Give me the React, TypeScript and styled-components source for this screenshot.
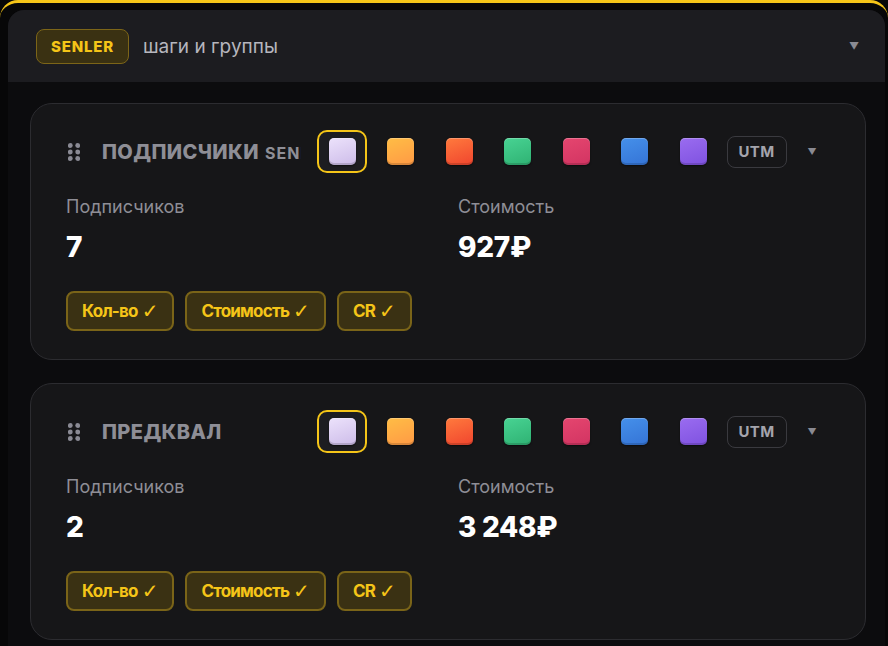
import React from "react";
import styled, { createGlobalStyle } from "styled-components";

const Global = createGlobalStyle`
  html, body { margin: 0; padding: 0; background: #070708; overflow: hidden; }
  body { font-family: Inter, "Noto Sans", "DejaVu Sans", sans-serif; }
  * { box-sizing: border-box; }
`;

const Frame = styled.div`
  width: 888px;
  height: 646px;
  border-top: 3px solid #f5c518;
  border-radius: 18px 18px 0 0;
  background: #070708;
  padding: 7px 3px 0 8px;
  overflow: hidden;
`;

const Panel = styled.div`
  background: #0c0c0e;
  border-radius: 16px 16px 0 0;
  height: 100%;
  display: flex;
  flex-direction: column;
`;

const Header = styled.div`
  height: 72px;
  background: #1c1c20;
  border-radius: 16px 16px 0 0;
  display: flex;
  align-items: center;
  padding: 0 26px 0 28px;
  gap: 14px;
`;

const SourceBadge = styled.span`
  height: 35px;
  width: 93px;
  display: inline-flex;
  align-items: center;
  justify-content: center;
  border: 1.5px solid #7c6518;
  background: #3a3112;
  border-radius: 8px;
  color: #f5c518;
  font-weight: 800;
  font-size: 15px;
  letter-spacing: 0.8px;
`;

const HeaderText = styled.span`
  flex: 1;
  color: #b6b6be;
  font-size: 19px;
`;

const Caret = styled.span<{ $size?: number }>`
  color: #8a8a92;
  font-size: ${(p) => p.$size ?? 9}px;
  line-height: 1;
  display: inline-flex;
  align-items: center;
  justify-content: center;
`;

const Body = styled.div`
  padding: 21px 19px 0 22px;
  display: flex;
  flex-direction: column;
  gap: 23px;
`;

const Card = styled.div`
  background: #161618;
  border: 1px solid #2c2c30;
  border-radius: 22px;
  padding: 26px 35px 28px 35px;
`;

const CardHead = styled.div`
  display: flex;
  align-items: center;
  height: 43px;
`;

const Handle = styled.span`
  width: 16px;
  display: inline-flex;
  justify-content: center;
  margin-right: 20px;
`;

const TitleBox = styled.div`
  width: 199px;
  flex: none;
  overflow: hidden;
  white-space: nowrap;
  margin-right: 16px;
  color: #8e8e96;
  display: flex;
  align-items: baseline;
  gap: 6px;
`;

const Title = styled.span`
  font-size: 20px;
  font-weight: 800;
  letter-spacing: 0.4px;
`;

const SubTitle = styled.span`
  font-size: 16px;
  font-weight: 700;
  letter-spacing: 1px;
`;

const Swatches = styled.div`
  display: flex;
  align-items: center;
  gap: 8.5px;
`;

const SwatchButton = styled.span<{ $active?: boolean }>`
  width: 50px;
  height: 43px;
  border-radius: 10px;
  border: 2px solid ${(p) => (p.$active ? "#f5c518" : "transparent")};
  background: ${(p) => (p.$active ? "#1d1d21" : "transparent")};
  display: inline-flex;
  align-items: center;
  justify-content: center;
`;

const Swatch = styled.span<{ $from: string; $to: string }>`
  width: 27px;
  height: 27px;
  border-radius: 5px;
  background: linear-gradient(160deg, ${(p) => p.$from}, ${(p) => p.$to});
  box-shadow: inset 0 1px 0 rgba(255, 255, 255, 0.25), inset 0 -2px 0 rgba(0, 0, 0, 0.15), 0 1px 2px rgba(0, 0, 0, 0.5);
`;

const UtmButton = styled.span`
  width: 60px;
  height: 32px;
  border: 1px solid #3a3a3f;
  border-radius: 8px;
  display: inline-flex;
  align-items: center;
  justify-content: center;
  color: #a4a4ac;
  font-weight: 700;
  font-size: 15px;
  letter-spacing: 0.4px;
`;

const CaretBox = styled.span`
  width: 34px;
  display: inline-flex;
  justify-content: center;
`;

const Stats = styled.div`
  display: grid;
  grid-template-columns: 1fr 1fr;
  column-gap: 20px;
  margin-top: 21px;
`;

const StatLabel = styled.div`
  color: #8e8e96;
  font-size: 18px;
  line-height: 22px;
  margin-top: 2px;
`;

const StatValue = styled.div`
  color: #ffffff;
  font-size: 28px;
  font-weight: 800;
  line-height: 34px;
  margin-top: 12px;
  letter-spacing: -0.3px;
`;

const Chips = styled.div`
  display: flex;
  gap: 11px;
  margin-top: 27px;
`;

const Chip = styled.span`
  height: 40px;
  padding: 0 14px;
  display: inline-flex;
  align-items: center;
  gap: 4px;
  border: 2px solid #7a6418;
  background: #3a3113;
  border-radius: 8px;
  color: #f5c518;
  font-size: 17px;
  font-weight: 700;
  letter-spacing: -0.8px;
`;

const Check = styled.span`
  font-family: "DejaVu Sans", sans-serif;
  font-size: 20px;
  font-weight: 700;
  letter-spacing: 0;
`;

const swatches: [string, string][] = [
  ["#ece2fb", "#cdbce9"],
  ["#ffbd45", "#ff9a45"],
  ["#ff7a3d", "#f0452e"],
  ["#48d393", "#2fb273"],
  ["#e5466f", "#d23462"],
  ["#4590ea", "#3574d6"],
  ["#9a6cf0", "#7f52e0"],
];

const Dots = () => (
  <svg width="12" height="18" viewBox="0 0 12 18">
    {[2.5, 9, 15.5].map((y) =>
      [2.3, 9.7].map((x) => <circle key={`${x}-${y}`} cx={x} cy={y} r="2.4" fill="#8a8a94" />)
    )}
  </svg>
);

type CardData = {
  title: string;
  sub?: string;
  subs: string;
  cost: string;
};

const cards: CardData[] = [
  { title: "ПОДПИСЧИКИ", sub: "SENLER", subs: "7", cost: "927₽" },
  { title: "ПРЕДКВАЛ", subs: "2", cost: "3 248₽" },
];

const StepCard = ({ data }: { data: CardData }) => (
  <Card>
    <CardHead>
      <Handle>
        <Dots />
      </Handle>
      <TitleBox>
        <Title>{data.title}</Title>
        {data.sub && <SubTitle>{data.sub}</SubTitle>}
      </TitleBox>
      <Swatches>
        {swatches.map(([a, b], i) => (
          <SwatchButton key={i} $active={i === 0}>
            <Swatch $from={a} $to={b} />
          </SwatchButton>
        ))}
        <UtmButton>UTM</UtmButton>
        <CaretBox>
          <Caret>▼</Caret>
        </CaretBox>
      </Swatches>
    </CardHead>
    <Stats>
      <div>
        <StatLabel>Подписчиков</StatLabel>
        <StatValue>{data.subs}</StatValue>
      </div>
      <div>
        <StatLabel>Стоимость</StatLabel>
        <StatValue>{data.cost}</StatValue>
      </div>
    </Stats>
    <Chips>
      <Chip>
        Кол-во <Check>✓</Check>
      </Chip>
      <Chip>
        Стоимость <Check>✓</Check>
      </Chip>
      <Chip>
        CR <Check>✓</Check>
      </Chip>
    </Chips>
  </Card>
);

export default function App() {
  return (
    <>
      <Global />
      <Frame>
        <Panel>
          <Header>
            <SourceBadge>SENLER</SourceBadge>
            <HeaderText>шаги и группы</HeaderText>
            <Caret $size={10}>▼</Caret>
          </Header>
          <Body>
            {cards.map((c) => (
              <StepCard key={c.title} data={c} />
            ))}
          </Body>
        </Panel>
      </Frame>
    </>
  );
}
